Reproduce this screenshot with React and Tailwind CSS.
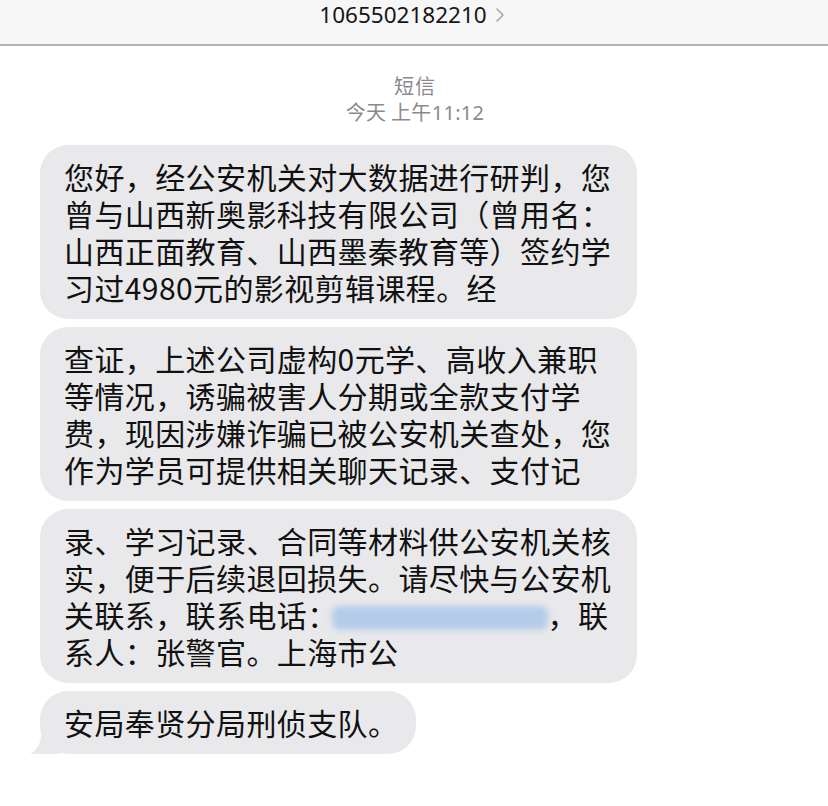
import React from "react";

const font = { fontFamily: '"Noto Sans CJK SC", "Noto Sans", sans-serif' };

function Bubble({ lines, tail = false, fit = false }) {
  return (
    <div className={"relative " + (fit ? "w-fit pr-[18px]" : "w-[597px]")}>
      {tail && (
        <svg
          className="absolute left-[-10px] bottom-0"
          width="30"
          height="30"
          viewBox="0 0 30 30"
        >
          <path d="M30 0 L30 30 L0 30 C8 26 12 18 12 0 Z" fill="#e9e9eb" />
        </svg>
      )}
      <div
        className={
          "relative bg-[#e9e9eb] rounded-[28px] py-[13px] pl-[24px] text-[30px] leading-[37px] tracking-[0.4px] text-[#111111] " +
          (fit ? "pr-[18px] -mr-[18px]" : "pr-[20px]")
        }
      >
        {lines.map((l, i) => (
          <div key={i} className="whitespace-nowrap">
            {l}
          </div>
        ))}
      </div>
    </div>
  );
}

export default function App() {
  return (
    <div className="w-[828px] h-[806px] bg-white overflow-hidden" style={font}>
      <div className="h-[46px] bg-[#f6f6f6] border-b-2 border-[#b4b4b4] flex items-start justify-center">
        <div className="flex items-center gap-[8px] -ml-[4px] -mt-[1px]">
          <span
            className="text-[22.5px] leading-[32px] text-[#161616]"
            style={{ fontFamily: '"Noto Sans", sans-serif' }}
          >
            1065502182210
          </span>
          <svg width="10" height="16" viewBox="0 0 10 16">
            <path
              d="M2 2 L8 8 L2 14"
              fill="none"
              stroke="#aaaaaa"
              strokeWidth="1.6"
              strokeLinecap="round"
              strokeLinejoin="round"
            />
          </svg>
        </div>
      </div>

      <div className="flex flex-col items-center pt-[27px] text-[#8a8a8e] pl-[2px]">
        <div className="text-[20px] leading-[26px] tracking-[1px]">短信</div>
        <div className="text-[20px] leading-[25px] tracking-[0.3px]">
          今天 上午<span style={{ fontFamily: '"Noto Sans", sans-serif' }}>11:12</span>
        </div>
      </div>

      <div className="flex flex-col gap-[8px] pl-[40px] pt-[20px]">
        <Bubble
          lines={[
            "您好，经公安机关对大数据进行研判，您",
            "曾与山西新奥影科技有限公司（曾用名：",
            "山西正面教育、山西墨秦教育等）签约学",
            "习过4980元的影视剪辑课程。经",
          ]}
        />
        <Bubble
          lines={[
            "查证，上述公司虚构0元学、高收入兼职",
            "等情况，诱骗被害人分期或全款支付学",
            "费，现因涉嫌诈骗已被公安机关查处，您",
            "作为学员可提供相关聊天记录、支付记",
          ]}
        />
        <Bubble
          lines={[
            "录、学习记录、合同等材料供公安机关核",
            "实，便于后续退回损失。请尽快与公安机",
            <span key="p">
              关联系，联系电话：
              <span className="inline-block align-[-3px] w-[216px] h-[24px] -ml-[6px] rounded-[8px] bg-[#b4cbea] blur-[3px]" />
              ，联
            </span>,
            "系人：张警官。上海市公",
          ]}
        />
        <Bubble tail fit lines={["安局奉贤分局刑侦支队。"]} />
      </div>
    </div>
  );
}
